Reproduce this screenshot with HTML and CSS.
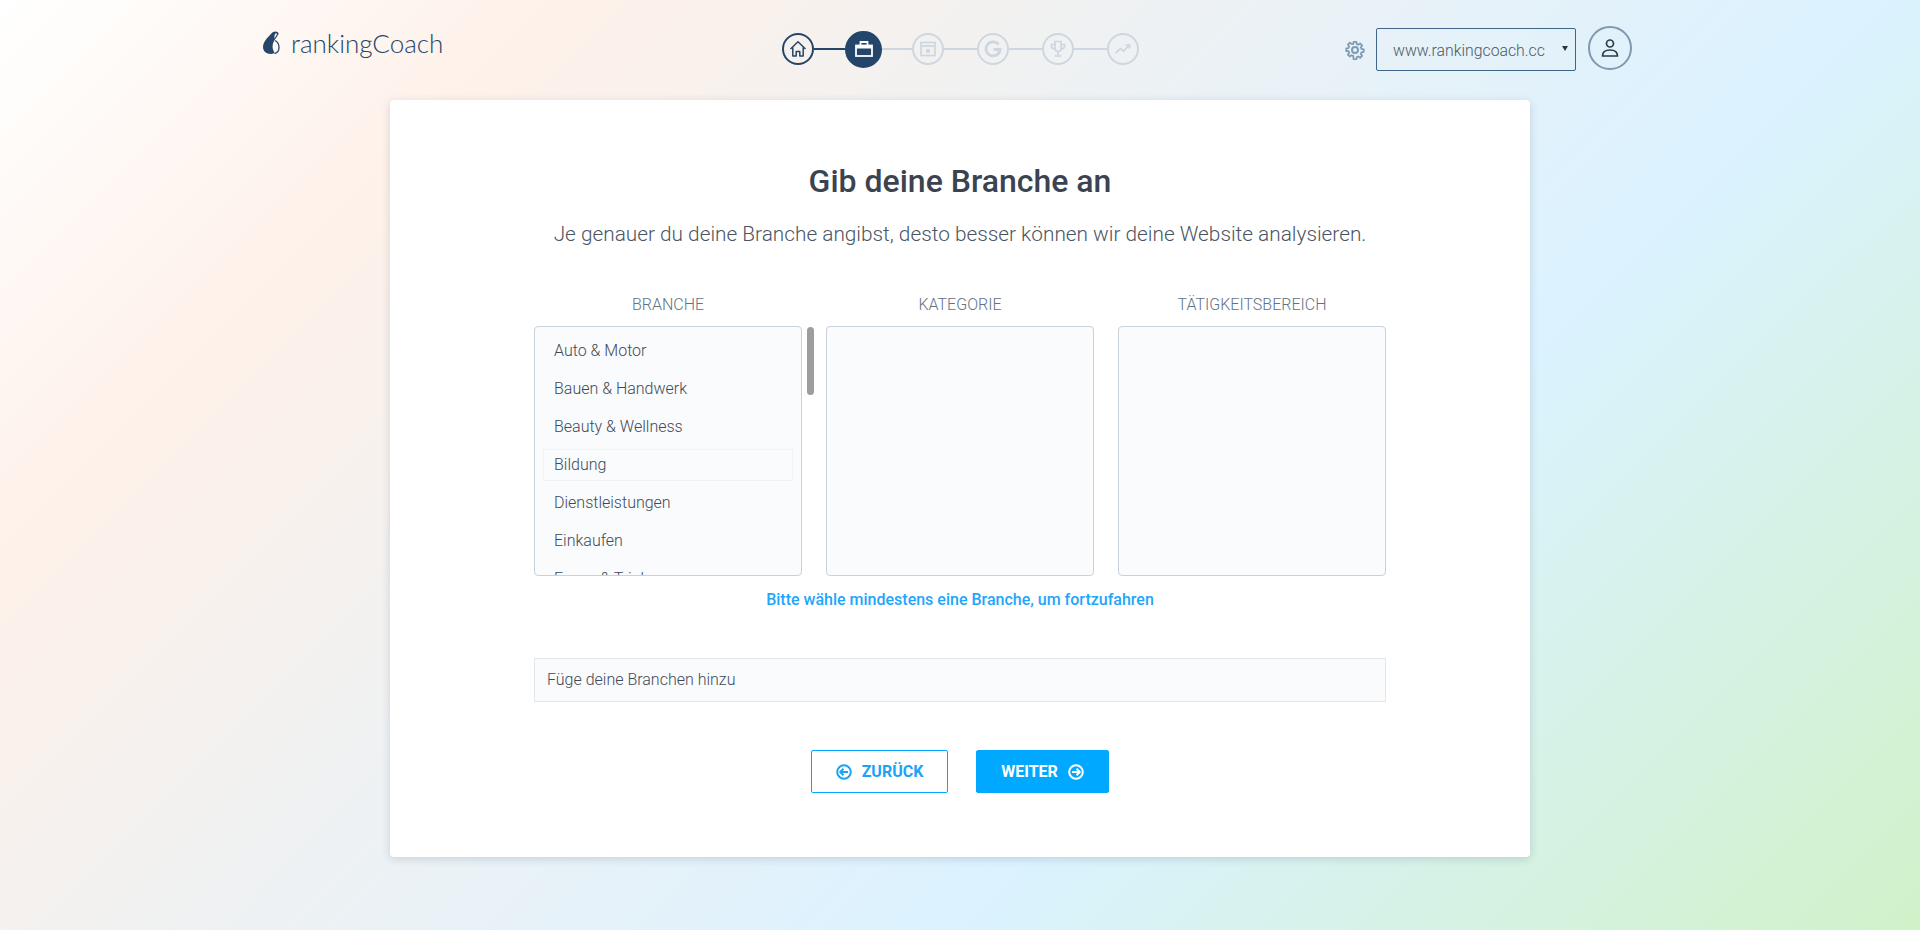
FILE: index.html
```html
<!DOCTYPE html>
<html lang="de">
<head>
  <meta charset="UTF-8" />
  <title>rankingCoach</title>
  <link rel="stylesheet" href="styles.css">
</head>
<body>

  <header class="kopf">
    <div class="logo">
      <svg class="logo-mark" width="17" height="24" viewBox="0 0 17 24">
        <path d="M10 1C6 5 0 10 0 16c0 4 3 7 8 7 2 0 3-1 3.500-1.500C9 18 9 14 11 10c1-2 3-4 4.500-7C16 1 13-.5 10 1z" fill="#24466a"/>
        <path d="M12 9.500c3 1.500 4 4.500 4 7 0 3-2 5.500-4.500 6" fill="none" stroke="#24466a" stroke-width="1.300"/>
        <path d="M12.500 2.500c1-.4 1.600.2 1.300 1.100-.5 1.400-1.700 2.600-2.400 4-.2-2 .1-4 1.100-5.100z" fill="#fff6f0"/>
      </svg>
      <span>rankingCoach</span>
    </div>

    <nav class="schritte">
      <div class="schritt erledigt">
        <svg width="18" height="18" viewBox="0 0 18 18" fill="none" stroke="#24466a" stroke-width="1.500" stroke-linejoin="round"><path d="M1.500 9L9 1.800 16.500 9M3.800 7.500V16h3.400v-4.500h3.600V16h3.400V7.500"/></svg>
      </div>
      <span class="linie aktiv"></span>
      <div class="schritt aktuell">
        <svg width="20" height="20" viewBox="0 0 20 20" fill="none" stroke="#fff"><rect x="2" y="6.500" width="16" height="10.500" stroke-width="1.800"/><path d="M2 8h16" stroke-width="3"/><path d="M6.500 6V3h7v3" stroke-width="1.800"/></svg>
      </div>
      <span class="linie kurz"></span>
      <div class="schritt">
        <svg width="18" height="18" viewBox="0 0 18 18" fill="none" stroke="#cdd6e1" stroke-width="1.700"><rect x="2" y="2.500" width="14" height="13"/><path d="M2 6h14"/><circle cx="9" cy="11" r="1.300" fill="#cdd6e1"/></svg>
      </div>
      <span class="linie"></span>
      <div class="schritt">
        <svg width="18" height="18" viewBox="0 0 18 18" fill="none" stroke="#cdd6e1" stroke-width="2.800"><path d="M14.500 4.500A7 7 0 1 0 16 9.500H9.500"/></svg>
      </div>
      <span class="linie"></span>
      <div class="schritt">
        <svg width="18" height="18" viewBox="0 0 18 18" fill="none" stroke="#cdd6e1" stroke-width="1.700"><path d="M6 1.500h6v7a3 3 0 0 1-6 0zM6 4.500H2.500v1.500A2.500 2.500 0 0 0 6 8.500M12 4.500h3.500v1.500A2.500 2.500 0 0 1 12 8.500M9 11.500V15M5.500 16h7"/></svg>
      </div>
      <span class="linie"></span>
      <div class="schritt">
        <svg width="18" height="18" viewBox="0 0 18 18" fill="none" stroke="#cdd6e1" stroke-width="1.700"><path d="M1.500 13l5-4.500 3 2.500 6-6M11.500 5h4v3.500"/></svg>
      </div>
    </nav>

    <div class="kopf-rechts">
      <svg class="zahnrad" width="20" height="20" viewBox="0 0 20 20" fill="none" stroke="#7f9bb3" stroke-width="2" stroke-linejoin="round"><path d="M8.500 1h3l.5 2.500 1.700.7 2.100-1.400 2.100 2.100-1.400 2.100.7 1.700 2.500.5v3l-2.500.5-.7 1.700 1.400 2.100-2.100 2.100-2.100-1.400-1.700.7-.5 2.500h-3L8 16.500l-1.700-.7-2.100 1.400-2.100-2.100 1.400-2.100-.7-1.700L.3 11.300v-3l2.500-.5.7-1.700-1.400-2.100 2.100-2.100 2.100 1.400L8 3.500z" transform="translate(1 1) scale(.9)"/><circle cx="10" cy="10" r="3"/></svg>
      <div class="auswahl">
        <span class="auswahl-text">www.rankingcoach.cc</span>
        <span class="pfeil"></span>
      </div>
      <div class="nutzer">
        <svg width="20" height="20" viewBox="0 0 20 20" fill="none" stroke="#2f3a47" stroke-width="1.700"><circle cx="10" cy="5.500" r="3.500"/><path d="M2.500 18c0-4 3-6 7.500-6s7.500 2 7.500 6z" stroke-linejoin="round"/></svg>
      </div>
    </div>
  </header>

  <main class="karte">
    <h1>Gib deine Branche an</h1>
    <p class="unterzeile">Je genauer du deine Branche angibst, desto besser können wir deine Website analysieren.</p>

    <div class="spalten">
      <div class="spalte">
        <div class="spalte-titel">BRANCHE</div>
        <div class="liste-rahmen">
          <div class="liste">
            <div class="eintrag">Auto &amp; Motor</div>
            <div class="eintrag">Bauen &amp; Handwerk</div>
            <div class="eintrag">Beauty &amp; Wellness</div>
            <div class="eintrag hover">Bildung</div>
            <div class="eintrag">Dienstleistungen</div>
            <div class="eintrag">Einkaufen</div>
            <div class="eintrag">Essen &amp; Trinken</div>
          </div>
          <span class="scrollbalken"></span>
        </div>
      </div>
      <div class="spalte">
        <div class="spalte-titel">KATEGORIE</div>
        <div class="liste"></div>
      </div>
      <div class="spalte">
        <div class="spalte-titel">TÄTIGKEITSBEREICH</div>
        <div class="liste"></div>
      </div>
    </div>

    <div class="hinweis">Bitte wähle mindestens eine Branche, um fortzufahren</div>

    <div class="eingabe">Füge deine Branchen hinzu</div>

    <div class="knoepfe">
      <button class="knopf zurueck">
        <svg width="16" height="16" viewBox="0 0 16 16" fill="none" stroke="#1ca3f5" stroke-width="2"><circle cx="8" cy="8" r="6.800"/><path d="M12 8H4.500M7.500 4.800L4.300 8l3.200 3.200"/></svg>
        ZURÜCK
      </button>
      <button class="knopf weiter">
        WEITER
        <svg width="16" height="16" viewBox="0 0 16 16" fill="none" stroke="#fff" stroke-width="2"><circle cx="8" cy="8" r="6.800"/><path d="M4 8h7.500M8.500 4.800L11.700 8l-3.200 3.200"/></svg>
      </button>
    </div>
  </main>

</body>
</html>
```

FILE: styles.css
```css
body {
  margin: 0;
  height: 930px;
  overflow: hidden;
  font-family: Roboto, Arial, sans-serif;
  color: #3c4654;
  background: linear-gradient(135deg, #ffffff 0%, #fef1e9 20%, #dbf2ff 66%, #d0f2c9 100%);
}

/* Kopfzeile */
.kopf {
  height: 100px;
  box-sizing: border-box;
  padding: 26px 288px 0 263px;
  display: grid;
  grid-template-columns: 519px auto 1fr;
  align-items: start;
}

.logo {
  display: flex;
  align-items: center;
  gap: 11px;
  height: 34px;
  font-family: Lato, sans-serif;
  font-size: 26px;
  font-weight: 300;
  color: #24466a;
}

.schritte {
  display: flex;
  align-items: center;
  height: 46px;
}

.schritt {
  width: 32px;
  height: 32px;
  box-sizing: border-box;
  border: 2px solid #cdd6e1;
  border-radius: 50%;
  display: flex;
  align-items: center;
  justify-content: center;
  flex-shrink: 0;
}

.schritt.erledigt {
  border-color: #24466a;
}

.schritt.aktuell {
  width: 37px;
  height: 37px;
  border-color: #24466a;
  background: #24466a;
}

.linie {
  width: 33px;
  height: 2px;
  background: #cdd6e1;
}

.linie.aktiv {
  width: 31px;
  background: #24466a;
}

.linie.kurz {
  width: 30px;
}

.kopf-rechts {
  display: flex;
  align-items: center;
  justify-content: flex-end;
  height: 44px;
}

.zahnrad {
  margin-right: 11px;
  margin-top: 3px;
}

.auswahl {
  width: 200px;
  height: 43px;
  margin-top: 2px;
  box-sizing: border-box;
  border: 1px solid #3f6688;
  border-radius: 2px;
  padding: 2px 7px 0 16px;
  display: flex;
  align-items: center;
  justify-content: space-between;
  font-size: 15.8px;
  font-weight: 300;
  color: #4c5967;
}

.auswahl-text {
  white-space: nowrap;
}

.pfeil {
  width: 0;
  height: 0;
  margin-bottom: 3px;
  border-left: 3px solid transparent;
  border-right: 3px solid transparent;
  border-top: 5px solid #333;
}

.nutzer {
  width: 44px;
  height: 44px;
  box-sizing: border-box;
  margin-left: 12px;
  border: 2px solid #7f98ad;
  border-radius: 50%;
  display: flex;
  align-items: center;
  justify-content: center;
}

/* Karte */
.karte {
  width: 1140px;
  height: 757px;
  margin: 0 auto;
  box-sizing: border-box;
  padding: 61px 144px 0;
  background: #fff;
  border-radius: 4px;
  box-shadow: 0 2px 8px rgba(60, 80, 110, 0.2);
  text-align: center;
}

h1 {
  margin: 0;
  font-size: 32px;
  line-height: 40px;
  font-weight: 500;
  color: #3b4350;
}

.unterzeile {
  margin: 20px 0 0;
  font-size: 20.8px;
  line-height: 26px;
  font-weight: 300;
  color: #4a5563;
  white-space: nowrap;
}

.spalten {
  margin-top: 48px;
  display: flex;
  gap: 24px;
}

.spalte {
  width: 268px;
}

.spalte-titel {
  font-size: 16px;
  line-height: 20px;
  font-weight: 300;
  color: #5f7286;
  margin-bottom: 11px;
}

.liste-rahmen {
  position: relative;
}

.liste {
  height: 250px;
  box-sizing: border-box;
  border: 1px solid #c8d1dc;
  border-radius: 4px;
  background: #f9fbfd;
  padding: 8px 8px 0;
  overflow: hidden;
  text-align: left;
}

.eintrag {
  height: 32px;
  margin-bottom: 6px;
  box-sizing: border-box;
  border: 1px solid transparent;
  padding-left: 10px;
  font-size: 16px;
  line-height: 30px;
  font-weight: 300;
  color: #3f4a58;
}

.eintrag.hover {
  border-color: #f0f2f5;
}

.scrollbalken {
  position: absolute;
  top: 1px;
  right: -12px;
  width: 7px;
  height: 68px;
  border-radius: 4px;
  background: #9d9d9d;
}

.hinweis {
  margin-top: 14px;
  font-size: 16px;
  line-height: 20px;
  font-weight: 500;
  color: #1fa5fb;
}

.eingabe {
  margin-top: 48px;
  height: 44px;
  box-sizing: border-box;
  border: 1px solid #e3e7ec;
  background: #f9fbfd;
  padding-left: 12px;
  font-size: 16px;
  line-height: 42px;
  font-weight: 300;
  color: #3f4a58;
  text-align: left;
}

.knoepfe {
  margin-top: 48px;
  display: flex;
  justify-content: center;
  gap: 28px;
}

.knopf {
  width: 137px;
  height: 43px;
  box-sizing: border-box;
  border: 1px solid #00a9ff;
  border-radius: 2px;
  font-family: Roboto, Arial, sans-serif;
  font-size: 16px;
  font-weight: 700;
  display: flex;
  align-items: center;
  justify-content: center;
  gap: 10px;
}

.knopf.zurueck {
  background: #fff;
  color: #1ca3f5;
}

.knopf.weiter {
  width: 133px;
  background: #00a9ff;
  color: #fff;
}
```
